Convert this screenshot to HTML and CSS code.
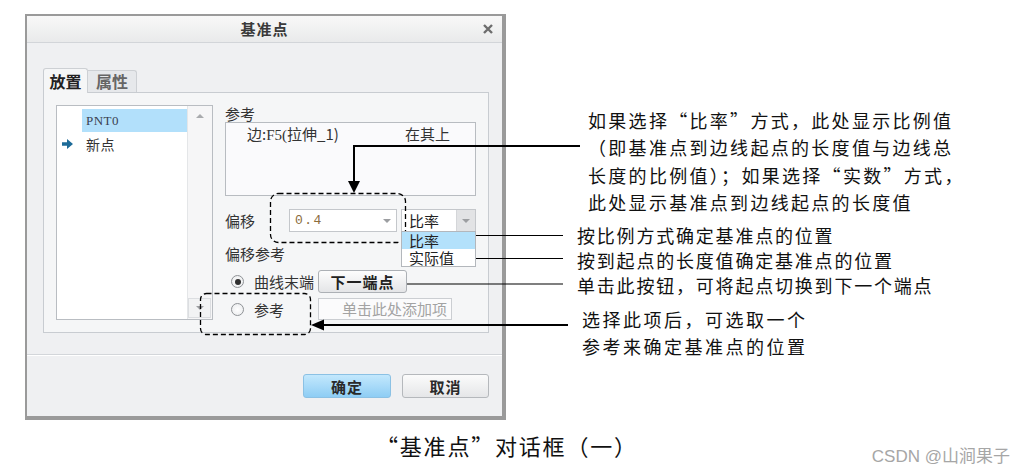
FILE: index.html
```html
<!DOCTYPE html>
<html lang="zh-CN">
<head>
  <meta charset="UTF-8" />
  <meta name="viewport" content="width=device-width, initial-scale=1.0"/>
  <title>基准点对话框</title>
  <link rel="stylesheet" href="styles.css">
</head>
<body>

  <div class="figure">
    <div class="stage">

      <div class="dialog">
        <div class="titlebar">
          <span></span>
          <span class="title">基准点</span>
          <span class="close">
            <svg width="10" height="10" viewBox="0 0 10 10"><path d="M1 1L9 9M9 1L1 9" stroke="#6d6d6d" stroke-width="2.4"/></svg>
          </span>
        </div>

        <div class="dlg-body">
          <div class="tabs">
            <span class="tab active">放置</span>
            <span class="tab">属性</span>
          </div>

          <div class="panel">
            <div class="listbox">
              <div class="list-items">
                <div class="item selected">
                  <span class="item-icon"></span>
                  <span class="item-text latin">PNT0</span>
                </div>
                <div class="item">
                  <span class="item-icon">
                    <svg width="11" height="10" viewBox="0 0 11 10"><polygon points="0,3.3 5,3.3 5,0 11,5 5,10 5,6.7 0,6.7" fill="#1d6b98"/></svg>
                  </span>
                  <span class="item-text">新点</span>
                </div>
              </div>
              <div class="scrollbar">
                <span class="sb-btn"><span class="tri-up"></span></span>
                <span class="sb-btn boxed"><span class="tri-down"></span></span>
              </div>
            </div>

            <div class="settings">
              <div class="field-label">参考</div>
              <div class="refbox">
                <span class="ref-name">边:<span class="latin">F5(</span>拉伸_1)</span>
                <span>在其上</span>
              </div>

              <div class="offset-row">
                <span class="field-label offset-label">偏移</span>
                <div class="combo">
                  <span class="combo-value">0.4</span>
                  <span class="combo-arrow"><span class="tri-down"></span></span>
                </div>
                <div class="select">
                  <span class="select-value">比率</span>
                  <span class="select-arrow"><span class="tri-down"></span></span>
                  <ul class="dropdown">
                    <li class="picked">比率</li>
                    <li>实际值</li>
                  </ul>
                </div>
              </div>

              <div class="field-label section-label">偏移参考</div>

              <div class="radio-row">
                <span class="radio checked"></span>
                <span class="radio-label">曲线末端</span>
                <button class="btn-small">下一端点</button>
              </div>
              <div class="radio-row second">
                <span class="radio"></span>
                <span class="radio-label">参考</span>
                <span class="add-input">单击此处添加项</span>
              </div>
            </div>
          </div>
        </div>

        <div class="footer">
          <button class="btn btn-ok">确定</button>
          <button class="btn btn-cancel">取消</button>
        </div>
      </div>

      <div class="notes">
        <p class="note note-1">如果选择“比率”方式，此处显示比例值<br>（即基准点到边线起点的长度值与边线总<br>长度的比例值）；如果选择“实数”方式，<br>此处显示基准点到边线起点的长度值</p>
        <p class="note note-2">按比例方式确定基准点的位置<br>按到起点的长度值确定基准点的位置<br>单击此按钮，可将起点切换到下一个端点</p>
        <p class="note note-3">选择此项后，可选取一个<br>参考来确定基准点的位置</p>
      </div>
    </div>

    <p class="caption">“基准点”对话框（一）</p>
    <div class="watermark">CSDN @山涧果子</div>

    <svg class="callouts" width="1026" height="476" viewBox="0 0 1026 476">
      <g fill="none" stroke="#000" stroke-width="1.3" stroke-dasharray="5 3">
        <rect x="270.5" y="193.5" width="135" height="49" rx="8"/>
        <rect x="200.5" y="293.5" width="110" height="41" rx="6"/>
      </g>
      <g fill="none" stroke="#000">
        <path d="M580 146H354V184" stroke-width="2"/>
        <path d="M467 235.5H563M467 258.5H563M407 284H563" stroke-width="1.2"/>
        <path d="M568 325H322" stroke-width="2"/>
      </g>
      <polygon points="348,181 360,181 354,193"/>
      <polygon points="311,325 324,319.5 324,330.5"/>
    </svg>
  </div>

</body>
</html>
```

FILE: styles.css
```css
body {
  margin: 0;
  background-color: #fff;
  font-family: "Noto Sans CJK SC", sans-serif;
  color: #222;
}

.figure {
  position: relative;
  width: 1026px;
  height: 476px;
  overflow: hidden;
}

.stage {
  display: flex;
  align-items: flex-start;
  padding: 14px 0 0 25px;
}

/* dialog frame */
.dialog {
  width: 475px;
  height: 400px;
  border: solid #9a9a9a;
  border-width: 2px 4px 4px 2px;
  background-color: #eff0f2;
  display: flex;
  flex-direction: column;
}

.titlebar {
  height: 26px;
  border-bottom: 1px solid #d2d5d9;
  background: linear-gradient(#f8f8f8, #e9eaeb);
  display: grid;
  grid-template-columns: 1fr auto 1fr;
  align-items: center;
}

.title {
  font-size: 15px;
  font-weight: bold;
  letter-spacing: 1px;
  color: #3a3a3a;
  line-height: 26px;
}

.close {
  justify-self: end;
  margin-right: 9px;
  display: flex;
}

.dlg-body {
  padding: 25px 13px 21px 16px;
  border-bottom: 1px solid #d3d6da;
}

/* tabs */
.tabs {
  display: flex;
  align-items: flex-end;
  height: 24px;
}

.tab {
  box-sizing: border-box;
  width: 49px;
  height: 22px;
  border: 1px solid #cdd0d4;
  border-left: none;
  border-bottom: none;
  border-radius: 0 3px 0 0;
  background-color: #e6e8eb;
  color: #666;
  font-size: 16px;
  font-weight: bold;
  line-height: 21px;
  text-align: center;
}

.tab.active {
  position: relative;
  z-index: 1;
  width: 45px;
  height: 25px;
  margin-bottom: -1px;
  border-left: 1px solid #c8ccd1;
  border-radius: 3px 3px 0 0;
  background-color: #f5f6f7;
  color: #222;
  line-height: 24px;
}

.panel {
  box-sizing: border-box;
  height: 241px;
  border: 1px solid #c8ccd1;
  background-color: #f5f6f7;
  padding: 12px;
  display: flex;
  gap: 12px;
}

/* list of points */
.listbox {
  box-sizing: border-box;
  width: 157px;
  height: 215px;
  border: 1px solid #b9bdc2;
  background-color: #fff;
  display: flex;
}

.list-items {
  flex: 1;
  padding-top: 3px;
}

.item {
  display: flex;
  align-items: center;
  height: 23px;
}

.item-icon {
  width: 25px;
  padding-left: 5px;
  box-sizing: border-box;
  display: flex;
}

.item-text {
  flex: 1;
  height: 100%;
  display: flex;
  align-items: center;
  padding-left: 4px;
  font-size: 14px;
  letter-spacing: 0.5px;
  color: #333;
}

.item.selected .item-text {
  background-color: #b2e0fb;
}

.latin {
  font-family: "Liberation Serif", "Noto Sans CJK SC", serif;
}

.item-text.latin {
  font-size: 13px;
  color: #3a4150;
}

.scrollbar {
  width: 24px;
  border-left: 1px solid #e4e6e8;
  background-color: #f6f6f7;
  display: flex;
  flex-direction: column;
  justify-content: space-between;
}

.sb-btn {
  height: 20px;
  display: flex;
  align-items: center;
  justify-content: center;
}

.sb-btn.boxed {
  height: 18px;
  margin: 0 1px 1px 0;
  border: 1px solid #dcdee1;
  background-color: #f2f3f4;
}

.tri-up,
.tri-down {
  width: 0;
  height: 0;
  border-left: 4px solid transparent;
  border-right: 4px solid transparent;
}

.tri-up {
  border-bottom: 4px solid #a9abae;
}

.tri-down {
  border-top: 4px solid #9c9ea1;
}

/* placement settings */
.settings {
  width: 251px;
  flex: none;
}

.field-label {
  font-size: 15px;
  line-height: 17px;
  color: #333;
}

.refbox {
  box-sizing: border-box;
  height: 74px;
  border: 1px solid #b8bcc1;
  background-color: #fafafc;
  padding: 2px 0 0 21px;
  display: flex;
  font-size: 15px;
  line-height: 18px;
  color: #333;
}

.ref-name {
  width: 158px;
}

.offset-row {
  display: flex;
  align-items: center;
  height: 23px;
  margin-top: 13px;
}

.offset-label {
  width: 64px;
}

.combo,
.select {
  box-sizing: border-box;
  height: 23px;
  border: 1px solid #c4c7cb;
  background-color: #fff;
  display: flex;
  align-items: center;
}

.combo {
  width: 108px;
}

.combo-value {
  flex: 1;
  padding-left: 5px;
  font-family: "Liberation Mono", monospace;
  font-size: 13px;
  letter-spacing: 1.5px;
  color: #8b6c3c;
}

.combo-arrow {
  width: 18px;
  height: 100%;
  display: flex;
  align-items: center;
  justify-content: center;
}

.select {
  position: relative;
  width: 75px;
  margin-left: 4px;
}

.select-value {
  flex: 1;
  padding-left: 7px;
  font-size: 15px;
}

.select-arrow {
  width: 18px;
  height: 100%;
  border-left: 1px solid #d4d6d9;
  background-color: #e2e3e5;
  display: flex;
  align-items: center;
  justify-content: center;
}

.dropdown {
  position: absolute;
  top: 100%;
  left: -1px;
  right: -1px;
  z-index: 2;
  margin: 0;
  padding: 0;
  list-style: none;
  border: 1px solid #b3b7bc;
  background-color: #fff;
}

.dropdown li {
  height: 17px;
  padding-left: 7px;
  font-size: 15px;
  line-height: 17px;
}

.dropdown li.picked {
  background-color: #b3e1fb;
}

.section-label {
  width: fit-content;
  margin-top: 13px;
  line-height: 18px;
}

.radio-row {
  display: flex;
  align-items: center;
  height: 23px;
  margin-top: 7px;
  padding-left: 6px;
}

.radio-row.second {
  height: 22px;
  margin-top: 5px;
}

.radio {
  box-sizing: border-box;
  width: 13px;
  height: 13px;
  margin-right: 10px;
  border: 1px solid #8f9296;
  border-radius: 50%;
  background: radial-gradient(#fff, #e8eaec);
  display: flex;
  align-items: center;
  justify-content: center;
}

.radio.checked::after {
  content: "";
  width: 6px;
  height: 6px;
  border-radius: 50%;
  background-color: #2f2f2f;
}

.radio-label {
  width: 64px;
  font-size: 15px;
  color: #333;
}

.btn-small {
  box-sizing: border-box;
  width: 89px;
  height: 23px;
  padding: 0;
  border: 1px solid #acb0b5;
  border-radius: 3px;
  background: linear-gradient(#fdfdfd, #e4e5e7);
  font-family: inherit;
  font-size: 15px;
  font-weight: bold;
  letter-spacing: 1px;
  color: #222;
}

.add-input {
  box-sizing: border-box;
  width: 134px;
  height: 22px;
  padding-left: 23px;
  border: 1px solid #cbced2;
  background-color: #fbfbfc;
  font-size: 15px;
  line-height: 20px;
  color: #a3a3a3;
}

/* footer buttons */
.footer {
  flex: 1;
  display: flex;
  justify-content: flex-end;
  align-items: flex-start;
  gap: 11px;
  padding: 19px 13px 0 0;
  box-shadow: inset 0 1px #fff;
}

.btn {
  box-sizing: border-box;
  width: 88px;
  height: 24px;
  padding: 0;
  border-radius: 3px;
  font-family: inherit;
  font-size: 15px;
  font-weight: bold;
  letter-spacing: 1px;
  color: #2a2a2a;
}

.btn-ok {
  border: 1px solid #8bc1e4;
  background: linear-gradient(#c3e8fd, #8ecdf4);
}

.btn-cancel {
  width: 87px;
  border: 1px solid #b5b8bc;
  background: linear-gradient(#fbfbfb, #e5e6e8);
}

/* annotation text */
.notes {
  font-size: 18px;
  color: #111;
  white-space: nowrap;
}

.note {
  margin: 0;
}

.note-1 {
  margin: 93px 0 0 82px;
  line-height: 27.3px;
  letter-spacing: 2.3px;
}

.note-2 {
  margin: 6.5px 0 0 71px;
  line-height: 25px;
  letter-spacing: 1.8px;
}

.note-3 {
  margin: 8.5px 0 0 76px;
  line-height: 27px;
  letter-spacing: 2.5px;
}

.caption {
  margin: 10px 0 0 376px;
  font-size: 22px;
  line-height: 30px;
  letter-spacing: 1.8px;
  color: #111;
}

.watermark {
  position: absolute;
  right: 16px;
  bottom: 9px;
  font-family: "Liberation Sans", "Noto Sans CJK SC", sans-serif;
  font-size: 17px;
  line-height: 20px;
  color: #a6a6a6;
}

.callouts {
  position: absolute;
  left: 0;
  top: 0;
  pointer-events: none;
}
```
